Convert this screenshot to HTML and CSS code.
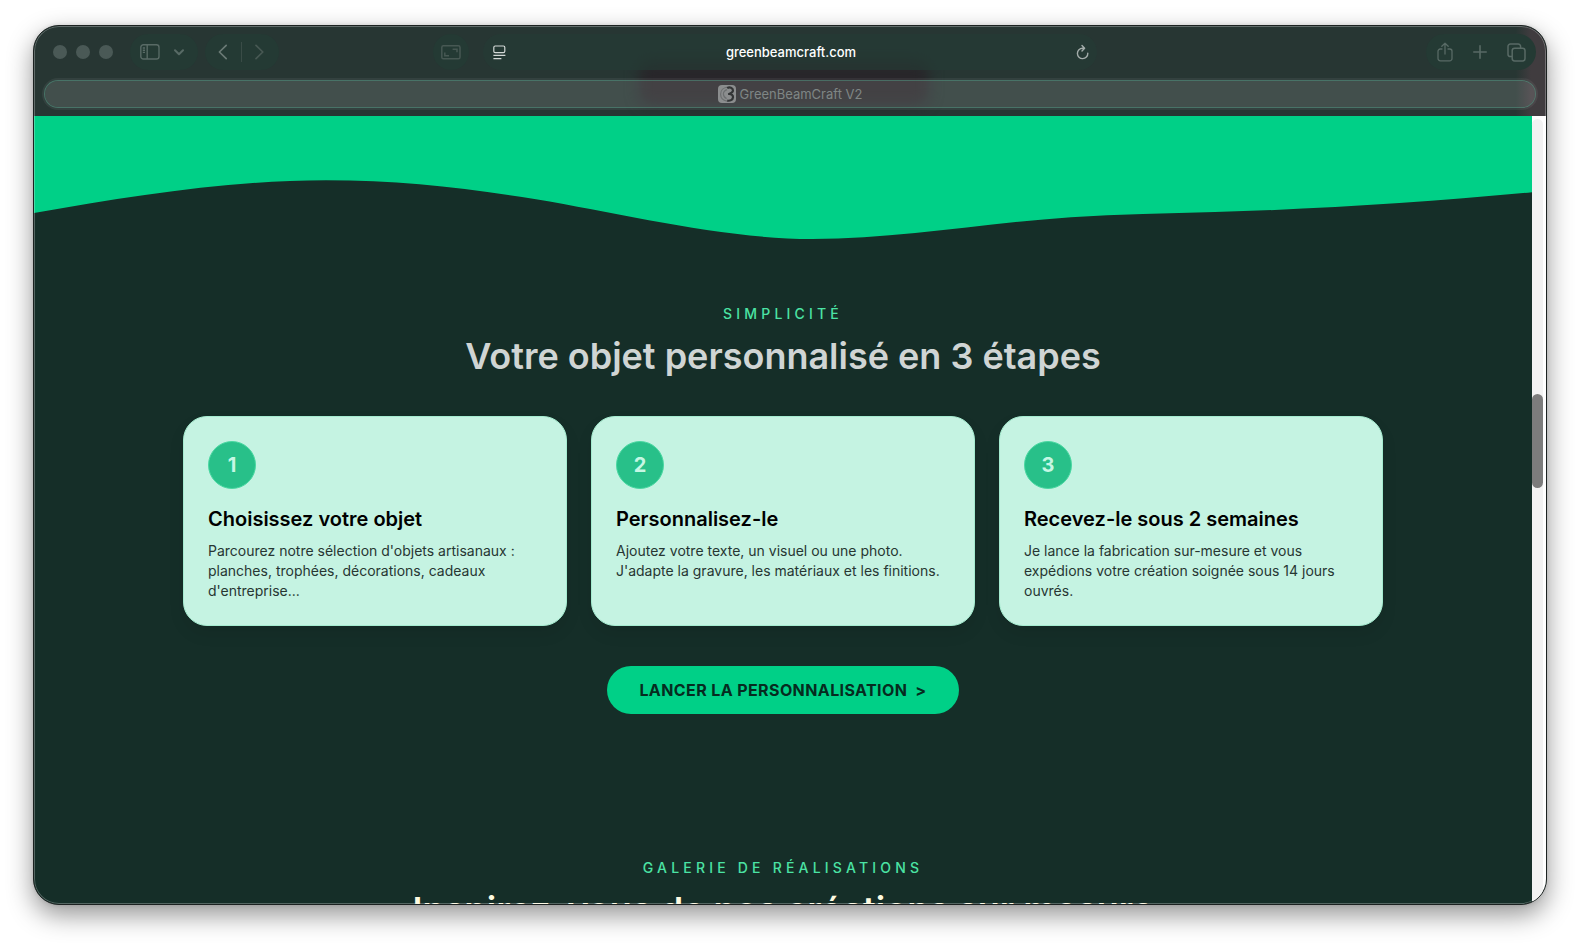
FILE: index.html
```html
<!DOCTYPE html>
<html lang="fr">
<head>
<meta charset="utf-8">
<title>GreenBeamCraft V2</title>
<link rel="stylesheet" href="styles.css">
</head>
<body>
<div class="window">
  <header class="chrome">
    <div class="toolbar">
      <div class="toolbar-left">
        <div class="lights"><span></span><span></span><span></span></div>
        <div class="group group-sidebar">
          <button class="tool" aria-label="Barre latérale">
            <svg width="20" height="16" viewBox="0 0 20 16" fill="none" stroke="currentColor" stroke-width="1.4"><rect x="0.8" y="0.8" width="18.2" height="14.2" rx="2.6"/><path d="M7.2 1v14M2.8 4h2.2M2.8 6.2h2.2M2.8 8.4h2.2"/></svg>
          </button>
          <button class="tool" aria-label="Groupes d'onglets">
            <svg width="10" height="7" viewBox="0 0 10 7" fill="none" stroke="currentColor" stroke-width="2" stroke-linecap="round" stroke-linejoin="round"><path d="M1 1.2l4 4 4-4"/></svg>
          </button>
        </div>
        <div class="group group-nav">
          <button class="tool tool-strong" aria-label="Précédent">
            <svg width="10" height="16" viewBox="0 0 10 16" fill="none" stroke="currentColor" stroke-width="1.7" stroke-linecap="round" stroke-linejoin="round"><path d="M8.2 1.4L1.4 8l6.8 6.6"/></svg>
          </button>
          <span class="divider"></span>
          <button class="tool tool-faint" aria-label="Suivant">
            <svg width="10" height="16" viewBox="0 0 10 16" fill="none" stroke="currentColor" stroke-width="1.7" stroke-linecap="round" stroke-linejoin="round"><path d="M1 1.4L7.8 8l-6.8 6.6"/></svg>
          </button>
        </div>
        <div class="group group-round">
          <button class="tool tool-faint" aria-label="Plein écran">
            <svg width="20" height="15" viewBox="0 0 20 15" fill="none" stroke="currentColor" stroke-width="1.5"><rect x="0.8" y="0.8" width="18.2" height="13" rx="1.6"/><path d="M11.6 4.200h4.4v3M8 10.800H3.800V7.600"/></svg>
          </button>
        </div>
      </div>
      <div class="address">
        <button class="tool tool-light" aria-label="Lecteur">
          <svg width="13" height="15" viewBox="0 0 13 15" fill="none" stroke="currentColor" stroke-width="1.2"><rect x="0.8" y="1" width="11" height="6.6" rx="1.4"/><path d="M0.4 10.4h12M0.4 13.6h8"/></svg>
        </button>
        <span class="url">greenbeamcraft.com</span>
        <button class="tool tool-reload" aria-label="Actualiser">
          <svg width="13" height="16" viewBox="0 0 13 16" fill="none" stroke="currentColor" stroke-width="1.4" stroke-linecap="round" stroke-linejoin="round"><path d="M7.800 4.200H6.600A5.200 5.200 0 1 0 11.800 9.200M6 1.400L8.600 4.200 6 7"/></svg>
        </button>
      </div>
      <div class="toolbar-right">
        <div class="group group-actions">
          <button class="tool" aria-label="Partager">
            <svg width="16" height="20" viewBox="0 0 16 20" fill="none" stroke="currentColor" stroke-width="1.3" stroke-linecap="round" stroke-linejoin="round"><path d="M5 7H3.2A2.2 2.2 0 0 0 1 9.200v7A2.400 2.400 0 0 0 3.400 18.800h9.200A2.400 2.400 0 0 0 15 16.400V9.200A2.200 2.200 0 0 0 12.800 7H11M8 12V1.200M4.800 4.200L8 1.200l3.200 3"/></svg>
          </button>
          <button class="tool" aria-label="Nouvel onglet">
            <svg width="14" height="14" viewBox="0 0 14 14" fill="none" stroke="currentColor" stroke-width="1.6" stroke-linecap="round"><path d="M7 0.800v12.400M0.800 7h12.400"/></svg>
          </button>
          <button class="tool" aria-label="Aperçu des onglets">
            <svg width="19" height="19" viewBox="0 0 19 19" fill="none" stroke="currentColor" stroke-width="1.500"><rect x="5.200" y="5.200" width="12.800" height="12.800" rx="2.400"/><path d="M5 13.600H3.400A2.400 2.400 0 0 1 1 11.200V3.400A2.400 2.400 0 0 1 3.400 1h7.800A2.400 2.400 0 0 1 13.600 3.400V5"/></svg>
          </button>
        </div>
      </div>
    </div>
    <button class="tab">
      <svg class="favicon" width="18" height="18" viewBox="0 0 18 18" fill="none"><rect width="18" height="18" rx="4" fill="#8b8d8e"/><path d="M9.500 2C5.400 2.600 2.600 5.600 2.600 9.200c0 3.400 2.600 6.200 6.400 7M9 4.600C6.800 5.400 5.400 7 5.400 9c0 2 1.200 3.600 3.200 4.600" stroke="#6c6f70" stroke-width="1.200"/><path d="M9.200 3.200C11.600 1.600 15 2.800 15 5.400c0 1.800-1.800 2.600-4 3.600 2.600 0 4.200 1.200 4 3.400-.2 2.400-2.800 3.800-5.800 3.200" stroke="#333536" stroke-width="2.200" stroke-linejoin="round"/></svg>
      <span>GreenBeamCraft V2</span>
    </button>
  </header>
  <div class="viewport">
    <main class="page">
      <svg class="wave" viewBox="0 0 1498 124" preserveAspectRatio="none" aria-hidden="true"><path fill="#00d087" d="M0 0V97C97 80 195 64.300 292 64.300C366 64.300 432 72 502 83.300C590 98 690 123 778 123C865 123 950 107 1037 101.300C1085 98 1133 97.500 1181 96C1290 93 1395 86 1498 76.300V0Z"/></svg>
      <section class="section">
        <p class="eyebrow">SIMPLICITÉ</p>
        <h2 class="title title-muted">Votre objet personnalisé en 3 étapes</h2>
        <div class="steps">
          <article class="card">
            <span class="badge">1</span>
            <h3>Choisissez votre objet</h3>
            <p>Parcourez notre sélection d'objets artisanaux : planches, trophées, décorations, cadeaux d'entreprise...</p>
          </article>
          <article class="card">
            <span class="badge">2</span>
            <h3>Personnalisez-le</h3>
            <p>Ajoutez votre texte, un visuel ou une photo. J'adapte la gravure, les matériaux et les finitions.</p>
          </article>
          <article class="card">
            <span class="badge">3</span>
            <h3>Recevez-le sous 2 semaines</h3>
            <p>Je lance la fabrication sur-mesure et vous expédions votre création soignée sous 14 jours ouvrés.</p>
          </article>
        </div>
        <a class="cta" href="#galerie"><span>LANCER LA PERSONNALISATION</span><span>&gt;</span></a>
      </section>
      <section class="section section-gallery" id="galerie">
        <p class="eyebrow">GALERIE DE RÉALISATIONS</p>
        <h2 class="title">Inspirez-vous de nos créations sur mesure</h2>
      </section>
    </main>
    <div class="scrollbar"><div class="track"><div class="thumb"></div></div></div>
  </div>
</div>
</body>
</html>
```
FILE: styles.css
```css
* {
  box-sizing: border-box;
}

body {
  margin: 0;
  height: 100vh;
  padding: 25px 33px 41px;
  background: #fff;
  font-family: Inter, "Liberation Sans", sans-serif;
  overflow: hidden;
}

h2, h3, p {
  margin: 0;
}

button {
  border: 0;
  padding: 0;
  background: none;
  color: inherit;
  font: inherit;
}

.window {
  position: relative;
  display: flex;
  flex-direction: column;
  height: 100%;
  border: 1px solid #1c2221;
  border-radius: 26px;
  background: #152e28;
  overflow: hidden;
  box-shadow: 0 10px 26px rgba(0, 0, 0, 0.42), 0 0 4px rgba(0, 0, 0, 0.12);
}

.window::after {
  content: "";
  position: absolute;
  inset: 0;
  border-radius: 25px;
  box-shadow: inset 0 0 0 1px rgba(255, 255, 255, 0.27);
  pointer-events: none;
}

/* Browser chrome */
.chrome {
  position: relative;
  flex: none;
  padding-bottom: 8px;
  overflow: hidden;
  background: linear-gradient(90deg, #273633 98%, #403c3f 99%);
}

.chrome::before {
  content: "";
  position: absolute;
  top: 35px;
  left: 40%;
  width: 290px;
  height: 44px;
  border-radius: 12px;
  background: #28262a;
  filter: blur(7px);
}

.toolbar {
  position: relative;
  display: grid;
  grid-template-columns: 1fr 614px 1fr;
  align-items: center;
  height: 54px;
  padding-bottom: 2px;
}

.toolbar-left {
  display: flex;
  align-items: center;
  padding: 0 14px 0 19px;
}

.toolbar-right {
  display: flex;
  justify-content: flex-end;
  padding-right: 10px;
}

.lights {
  display: flex;
  gap: 9px;
  margin-right: 17px;
}

.lights span {
  width: 14px;
  height: 14px;
  border-radius: 50%;
  background: #4a5956;
}

.group {
  display: flex;
  align-items: center;
  height: 36px;
  border-radius: 18px;
  background: #243a34;
  color: #586a65;
}

.group-sidebar {
  gap: 14px;
  padding: 0 14px 0 10px;
  margin-right: 7px;
}

.group-nav {
  gap: 13px;
  padding: 0 14px 0 13px;
}

.group-round {
  justify-content: center;
  width: 36px;
  margin-left: auto;
}

.group-actions {
  gap: 20px;
  padding: 0 10px 0 11px;
}

.tool {
  display: flex;
}

.tool-strong {
  color: #6a7a75;
}

.tool-faint {
  color: #475853;
}

.tool-light {
  color: #d3d8d6;
}

.tool-reload {
  color: #a3acaa;
}

.divider {
  width: 1px;
  height: 20px;
  background: #3a4c47;
}

.address {
  display: flex;
  align-items: center;
  justify-content: space-between;
  height: 36px;
  padding: 0 8px 0 10px;
  border-radius: 18px;
  background: rgba(36, 60, 53, 0.6);
}

.url {
  color: #fff;
  font-size: 13px;
  font-weight: 500;
  line-height: 16px;
}

.tab {
  position: relative;
  display: flex;
  align-items: center;
  justify-content: center;
  gap: 4px;
  width: calc(100% - 20px);
  height: 28px;
  margin: 0 10px;
  border: 1px solid rgba(100, 165, 145, 0.55);
  border-radius: 14px;
  background: rgba(255, 255, 255, 0.125);
  background-clip: padding-box;
  box-shadow: 0 0 0 2px rgba(255, 255, 255, 0.06);
  color: #7f8685;
  font-size: 13px;
  line-height: 16px;
}

/* Page */
.viewport {
  display: flex;
  flex: 1;
  min-height: 0;
}

.page {
  flex: 1;
  overflow: hidden;
  background: #152e28;
}

.wave {
  display: block;
  width: 100%;
  height: 124px;
}

.section {
  display: flex;
  flex-direction: column;
  align-items: center;
  padding: 64px 24px;
}

.section-gallery {
  padding-top: 80px;
}

.eyebrow {
  color: #4be3a4;
  font-size: 14px;
  font-weight: 500;
  line-height: 20px;
  letter-spacing: 0.3em;
}

.title {
  margin-top: 12px;
  color: #fefae0;
  font-size: 36px;
  font-weight: 600;
  line-height: 40px;
  text-align: center;
}

.title-muted {
  color: #d0d5d4;
}

.steps {
  display: grid;
  grid-template-columns: repeat(3, 1fr);
  gap: 24px;
  width: 100%;
  max-width: 1200px;
  margin: 40px 0;
}

.card {
  padding: 24px;
  border: 1px solid #a5ecd0;
  border-radius: 24px;
  background: #c5f3e2;
  box-shadow: 0 8px 16px rgba(0, 0, 0, 0.08);
}

.badge {
  display: flex;
  align-items: center;
  justify-content: center;
  width: 48px;
  height: 48px;
  border: 1px solid #4bd8a2;
  border-radius: 50%;
  background: #28c089;
  color: #c6f7e4;
  font-size: 20px;
  font-weight: 700;
}

.card h3 {
  margin: 16px 0 8px;
  color: #000;
  font-size: 20px;
  font-weight: 600;
  line-height: 28px;
}

.card p {
  color: #273632;
  font-size: 14px;
  line-height: 20px;
}

.cta {
  display: flex;
  gap: 8px;
  padding: 12px 32px;
  border-radius: 24px;
  background: #00d087;
  color: #062b20;
  font-size: 16px;
  font-weight: 700;
  line-height: 24px;
  letter-spacing: 0.025em;
  text-decoration: none;
}

.scrollbar {
  flex: none;
  width: 14px;
  padding: 3px 3px 0 0;
  background: #fff;
}

.track {
  position: relative;
  height: 100%;
  border-radius: 6px 6px 0 0;
  background: #f2f2f2;
}

.thumb {
  position: absolute;
  top: 35%;
  width: 100%;
  height: 12%;
  border-radius: 6px;
  background: #7c7c7c;
}
```
